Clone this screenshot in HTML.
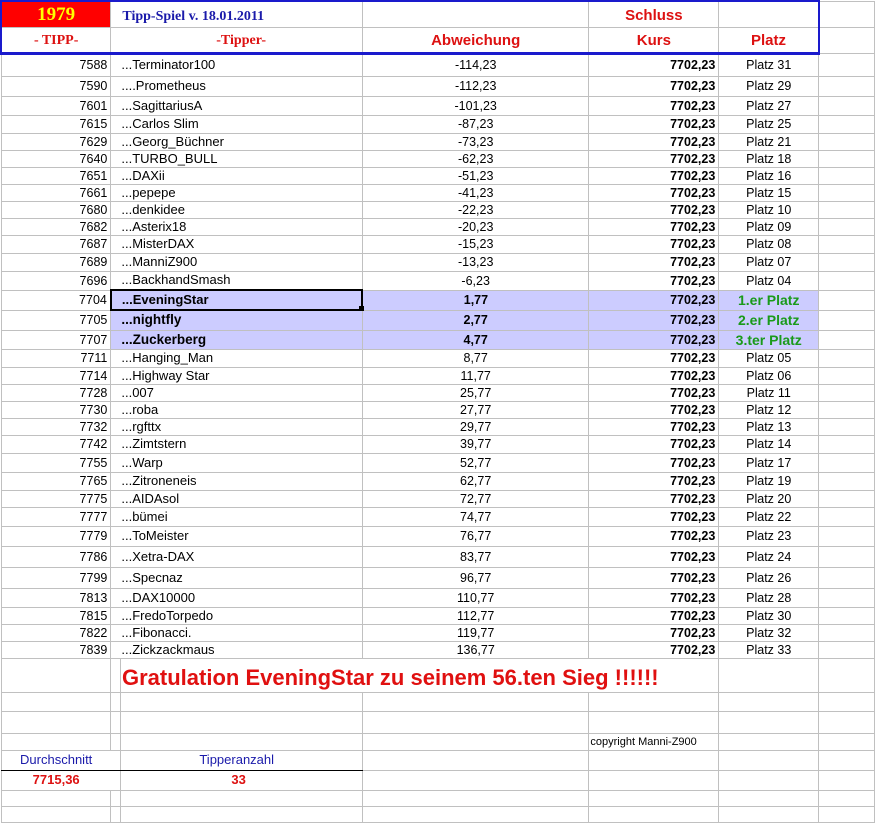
<!DOCTYPE html>
<html><head><meta charset="utf-8"><style>
body{margin:0;background:#fff;width:875px;height:821px;overflow:hidden;position:relative;font-family:"Liberation Sans",Arial,sans-serif;font-size:12.5px;}
table{border-collapse:collapse;table-layout:fixed;position:absolute;left:0;top:0;}
td{border:1px solid #c0c0c0;padding:0 3px;white-space:nowrap;overflow:visible;line-height:12px;}
td.a{text-align:right;}
td.b{padding-left:10px;font-size:13px;}
td.d{text-align:center;}
td.e{text-align:right;font-weight:bold;}
td.f{text-align:center;}
tr.h td.b,tr.h td.c,tr.h td.d,tr.h td.e,tr.h td.f{background:#ccccff;}
tr.h td.b{font-weight:bold;}
tr.h td.d{font-weight:bold;}
tr.h td.f{color:#1a9a1a;font-weight:bold;font-size:14px;}
.serif{font-family:"Liberation Serif",serif;}
</style></head><body>
<table>
<colgroup><col style="width:110px"><col style="width:10px"><col style="width:242px"><col style="width:227px"><col style="width:130px"><col style="width:100px"><col style="width:56px"></colgroup>
<tr style="height:26px">
<td class="serif" style="background:#ff0000;color:#ffff00;font-weight:bold;font-size:19px;text-align:center;border-top:2px solid #1a1acc;border-left:2px solid #1a1acc;padding-top:2px">1979</td>
<td colspan="2" class="serif" style="color:#1a1aaa;font-weight:bold;font-size:14px;border-top:2px solid #1a1acc;padding-left:11px;padding-top:5px">Tipp-Spiel v. 18.01.2011</td>
<td style="border-top:2px solid #1a1acc"></td>
<td style="color:#dd1111;font-weight:bold;font-size:15px;text-align:center;border-top:2px solid #1a1acc;padding-top:3px">Schluss</td>
<td style="border-top:2px solid #1a1acc;border-right:2px solid #1a1acc"></td><td></td></tr>
<tr style="height:26px">
<td class="serif" style="color:#dd1111;font-weight:bold;font-size:14px;text-align:center;border-bottom:3px solid #1a1acc;border-left:2px solid #1a1acc;padding-top:3px">- TIPP-</td>
<td colspan="2" class="serif" style="color:#dd1111;font-weight:bold;font-size:14px;text-align:center;border-bottom:3px solid #1a1acc;padding-left:12px;padding-top:3px">-Tipper-</td>
<td style="color:#dd1111;font-weight:bold;font-size:15px;text-align:center;border-bottom:3px solid #1a1acc;padding-top:3px">Abweichung</td>
<td style="color:#dd1111;font-weight:bold;font-size:15px;text-align:center;border-bottom:3px solid #1a1acc;padding-top:3px">Kurs</td>
<td style="color:#dd1111;font-weight:bold;font-size:15px;text-align:center;border-bottom:3px solid #1a1acc;border-right:2px solid #1a1acc;padding-top:3px">Platz</td><td></td></tr>
<tr style="height:23px"><td class="a">7588</td><td colspan="2" class="b">...Terminator100</td><td class="d">-114,23</td><td class="e">7702,23</td><td class="f">Platz 31</td><td></td></tr>
<tr style="height:20px"><td class="a">7590</td><td colspan="2" class="b">....Prometheus</td><td class="d">-112,23</td><td class="e">7702,23</td><td class="f">Platz 29</td><td></td></tr>
<tr style="height:19px"><td class="a">7601</td><td colspan="2" class="b">...SagittariusA</td><td class="d">-101,23</td><td class="e">7702,23</td><td class="f">Platz 27</td><td></td></tr>
<tr style="height:18px"><td class="a">7615</td><td colspan="2" class="b">...Carlos Slim</td><td class="d">-87,23</td><td class="e">7702,23</td><td class="f">Platz 25</td><td></td></tr>
<tr style="height:17px"><td class="a">7629</td><td colspan="2" class="b">...Georg_Büchner</td><td class="d">-73,23</td><td class="e">7702,23</td><td class="f">Platz 21</td><td></td></tr>
<tr style="height:17px"><td class="a">7640</td><td colspan="2" class="b">...TURBO_BULL</td><td class="d">-62,23</td><td class="e">7702,23</td><td class="f">Platz 18</td><td></td></tr>
<tr style="height:17px"><td class="a">7651</td><td colspan="2" class="b">...DAXii</td><td class="d">-51,23</td><td class="e">7702,23</td><td class="f">Platz 16</td><td></td></tr>
<tr style="height:17px"><td class="a">7661</td><td colspan="2" class="b">...pepepe</td><td class="d">-41,23</td><td class="e">7702,23</td><td class="f">Platz 15</td><td></td></tr>
<tr style="height:17px"><td class="a">7680</td><td colspan="2" class="b">...denkidee</td><td class="d">-22,23</td><td class="e">7702,23</td><td class="f">Platz 10</td><td></td></tr>
<tr style="height:17px"><td class="a">7682</td><td colspan="2" class="b">...Asterix18</td><td class="d">-20,23</td><td class="e">7702,23</td><td class="f">Platz 09</td><td></td></tr>
<tr style="height:18px"><td class="a">7687</td><td colspan="2" class="b">...MisterDAX</td><td class="d">-15,23</td><td class="e">7702,23</td><td class="f">Platz 08</td><td></td></tr>
<tr style="height:18px"><td class="a">7689</td><td colspan="2" class="b">...ManniZ900</td><td class="d">-13,23</td><td class="e">7702,23</td><td class="f">Platz 07</td><td></td></tr>
<tr style="height:19px"><td class="a">7696</td><td colspan="2" class="b">...BackhandSmash</td><td class="d">-6,23</td><td class="e">7702,23</td><td class="f">Platz 04</td><td></td></tr>
<tr class="h" style="height:20px"><td class="a">7704</td><td colspan="2" class="b" style="border:2px solid #000">...EveningStar</td><td class="d">1,77</td><td class="e">7702,23</td><td class="f">1.er Platz</td><td></td></tr>
<tr class="h" style="height:20px"><td class="a">7705</td><td colspan="2" class="b" style="font-size:13.5px">...nightfly</td><td class="d">2,77</td><td class="e">7702,23</td><td class="f">2.er Platz</td><td></td></tr>
<tr class="h" style="height:19px"><td class="a">7707</td><td colspan="2" class="b" style="font-size:13.5px">...Zuckerberg</td><td class="d">4,77</td><td class="e">7702,23</td><td class="f">3.ter Platz</td><td></td></tr>
<tr style="height:18px"><td class="a">7711</td><td colspan="2" class="b">...Hanging_Man</td><td class="d">8,77</td><td class="e">7702,23</td><td class="f">Platz 05</td><td></td></tr>
<tr style="height:17px"><td class="a">7714</td><td colspan="2" class="b">...Highway Star</td><td class="d">11,77</td><td class="e">7702,23</td><td class="f">Platz 06</td><td></td></tr>
<tr style="height:17px"><td class="a">7728</td><td colspan="2" class="b">...007</td><td class="d">25,77</td><td class="e">7702,23</td><td class="f">Platz 11</td><td></td></tr>
<tr style="height:17px"><td class="a">7730</td><td colspan="2" class="b">...roba</td><td class="d">27,77</td><td class="e">7702,23</td><td class="f">Platz 12</td><td></td></tr>
<tr style="height:17px"><td class="a">7732</td><td colspan="2" class="b">...rgfttx</td><td class="d">29,77</td><td class="e">7702,23</td><td class="f">Platz 13</td><td></td></tr>
<tr style="height:18px"><td class="a">7742</td><td colspan="2" class="b">...Zimtstern</td><td class="d">39,77</td><td class="e">7702,23</td><td class="f">Platz 14</td><td></td></tr>
<tr style="height:19px"><td class="a">7755</td><td colspan="2" class="b">...Warp</td><td class="d">52,77</td><td class="e">7702,23</td><td class="f">Platz 17</td><td></td></tr>
<tr style="height:18px"><td class="a">7765</td><td colspan="2" class="b">...Zitroneneis</td><td class="d">62,77</td><td class="e">7702,23</td><td class="f">Platz 19</td><td></td></tr>
<tr style="height:17px"><td class="a">7775</td><td colspan="2" class="b">...AIDAsol</td><td class="d">72,77</td><td class="e">7702,23</td><td class="f">Platz 20</td><td></td></tr>
<tr style="height:19px"><td class="a">7777</td><td colspan="2" class="b">...bümei</td><td class="d">74,77</td><td class="e">7702,23</td><td class="f">Platz 22</td><td></td></tr>
<tr style="height:20px"><td class="a">7779</td><td colspan="2" class="b">...ToMeister</td><td class="d">76,77</td><td class="e">7702,23</td><td class="f">Platz 23</td><td></td></tr>
<tr style="height:21px"><td class="a">7786</td><td colspan="2" class="b">...Xetra-DAX</td><td class="d">83,77</td><td class="e">7702,23</td><td class="f">Platz 24</td><td></td></tr>
<tr style="height:21px"><td class="a">7799</td><td colspan="2" class="b">...Specnaz</td><td class="d">96,77</td><td class="e">7702,23</td><td class="f">Platz 26</td><td></td></tr>
<tr style="height:19px"><td class="a">7813</td><td colspan="2" class="b">...DAX10000</td><td class="d">110,77</td><td class="e">7702,23</td><td class="f">Platz 28</td><td></td></tr>
<tr style="height:17px"><td class="a">7815</td><td colspan="2" class="b">...FredoTorpedo</td><td class="d">112,77</td><td class="e">7702,23</td><td class="f">Platz 30</td><td></td></tr>
<tr style="height:17px"><td class="a">7822</td><td colspan="2" class="b">...Fibonacci.</td><td class="d">119,77</td><td class="e">7702,23</td><td class="f">Platz 32</td><td></td></tr>
<tr style="height:17px"><td class="a">7839</td><td colspan="2" class="b">...Zickzackmaus</td><td class="d">136,77</td><td class="e">7702,23</td><td class="f">Platz 33</td><td></td></tr>
<tr style="height:34px"><td></td><td></td><td style="border-right:none"></td><td style="border-left:none;border-right:none"></td><td style="border-left:none"></td><td></td><td></td></tr>
<tr style="height:19px"><td></td><td></td><td></td><td></td><td></td><td></td><td></td></tr>
<tr style="height:22px"><td></td><td style="border-top:1px solid #000"></td><td></td><td></td><td></td><td></td><td></td></tr>
<tr style="height:17px"><td></td><td></td><td></td><td></td><td style="font-size:11px;padding-left:1px;text-align:left">copyright Manni-Z900</td><td></td><td></td></tr>
<tr style="height:20px"><td style="color:#1a1aaa;text-align:center;font-size:13px;border-bottom:1px solid #000;border-right:none">Durchschnitt</td><td style="border-bottom:1px solid #000;border-left:none;border-right:none"></td><td style="color:#1a1aaa;text-align:left;padding-left:78px;font-size:13px;border-bottom:1px solid #000">Tipperanzahl</td><td></td><td></td><td></td><td></td></tr>
<tr style="height:20px"><td style="color:#dd1111;font-weight:bold;text-align:center;font-size:13px;border-right:none">7715,36</td><td style="border-left:none;border-right:none"></td><td style="color:#dd1111;font-weight:bold;text-align:left;padding-left:110px;font-size:13px">33</td><td></td><td></td><td></td><td></td></tr>
<tr style="height:16px"><td></td><td></td><td></td><td></td><td></td><td></td><td></td></tr>
<tr style="height:16px"><td></td><td></td><td></td><td></td><td></td><td></td><td></td></tr>
</table>
<div style="position:absolute;left:122px;top:665px;color:#e01010;font-weight:bold;font-size:22px;white-space:nowrap">Gratulation EveningStar zu seinem 56.ten Sieg !!!!!!</div>
<div style="position:absolute;left:359px;top:306px;width:5px;height:5px;background:#000"></div>
</body></html>
